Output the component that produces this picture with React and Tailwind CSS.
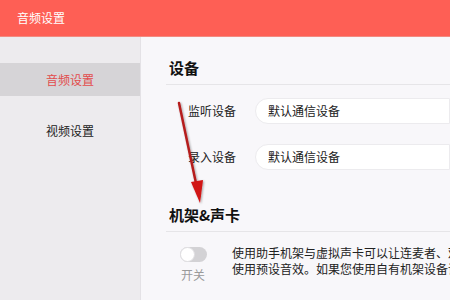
export default function App() {
  const font = { fontFamily: '"Noto Sans CJK SC", "Noto Sans", sans-serif' };
  return (
    <div className="w-[450px] h-[300px] overflow-hidden relative bg-[#f8f7fa]" style={font}>
      <div className="h-[37px] bg-[#fe5f55] flex items-center pl-[17px] text-white text-[12px] border-b border-[#f28a80]">
        音频设置
      </div>
      <div className="flex h-[263px]">
        <div className="w-[141px] shrink-0 bg-[#edebee] border-r border-[#e4e2e6] pt-[26px]">
          <div className="h-[33px] bg-[#d6d4d7] flex items-center justify-center text-[12px] text-[#e24c4c]">音频设置</div>
          <div className="h-[33px] mt-[18px] flex items-center justify-center text-[12px] text-[#222]">视频设置</div>
        </div>
        <div className="flex-1 pl-[25px] overflow-hidden">
          <div className="pt-[18px] pl-[3px] text-[15px] font-bold text-[#111] leading-[26px]">设备</div>
          <div className="mt-[3px] h-px bg-[#e6e5e8]"></div>
          <div className="mt-[13px] flex items-center h-[26px]">
            <div className="w-[67px] pl-[22px] shrink-0 text-[12px] text-[#222] whitespace-nowrap">监听设备</div>
            <div className="ml-[22px] flex-1 h-[26px] bg-white rounded-l-[13px] border border-[#ecebee] flex items-center pl-[12px] text-[12px] text-[#222] whitespace-nowrap">默认通信设备</div>
          </div>
          <div className="mt-[20px] flex items-center h-[26px]">
            <div className="w-[67px] pl-[22px] shrink-0 text-[12px] text-[#222] whitespace-nowrap">录入设备</div>
            <div className="ml-[22px] flex-1 h-[26px] bg-white rounded-l-[13px] border border-[#ecebee] flex items-center pl-[12px] text-[12px] text-[#222] whitespace-nowrap">默认通信设备</div>
          </div>
          <div className="mt-[32px] pl-[3px] text-[15px] font-bold text-[#111] leading-[26px] whitespace-nowrap">机架&amp;声卡</div>
          <div className="mt-[3px] h-px bg-[#e6e5e8]"></div>
          <div className="mt-[13px] flex">
            <div className="w-[66px] shrink-0 flex flex-col items-start pl-[14px] pt-[2px]">
              <div className="w-[27px] h-[15px] rounded-full bg-[#d3d2d5] relative">
                <div className="absolute left-0 top-0 w-[15px] h-[15px] rounded-full bg-white border border-[#e0dfe2]"></div>
              </div>
              <div className="mt-[4px] ml-[1px] text-[12px] text-[#9a9a9a] leading-[18px]">开关</div>
            </div>
            <div className="text-[12px] text-[#222] leading-[16px] whitespace-nowrap">
              <div>使用助手机架与虚拟声卡可以让连麦者、观众听到</div>
              <div>使用预设音效。如果您使用自有机架设备请关闭</div>
            </div>
          </div>
        </div>
      </div>
      <svg className="absolute left-0 top-0 pointer-events-none" width="450" height="300">
        <defs>
          <filter id="sh" x="-50%" y="-50%" width="200%" height="200%">
            <feDropShadow dx="1" dy="1" stdDeviation="1" floodColor="#000" floodOpacity="0.35" />
          </filter>
        </defs>
        <g filter="url(#sh)">
          <line x1="179" y1="103" x2="197" y2="188" stroke="#b51d1d" strokeWidth="2.5" strokeLinecap="round" />
          <polygon points="200,203 191,182 203,180" fill="#d11414" />
        </g>
      </svg>
    </div>
  );
}
